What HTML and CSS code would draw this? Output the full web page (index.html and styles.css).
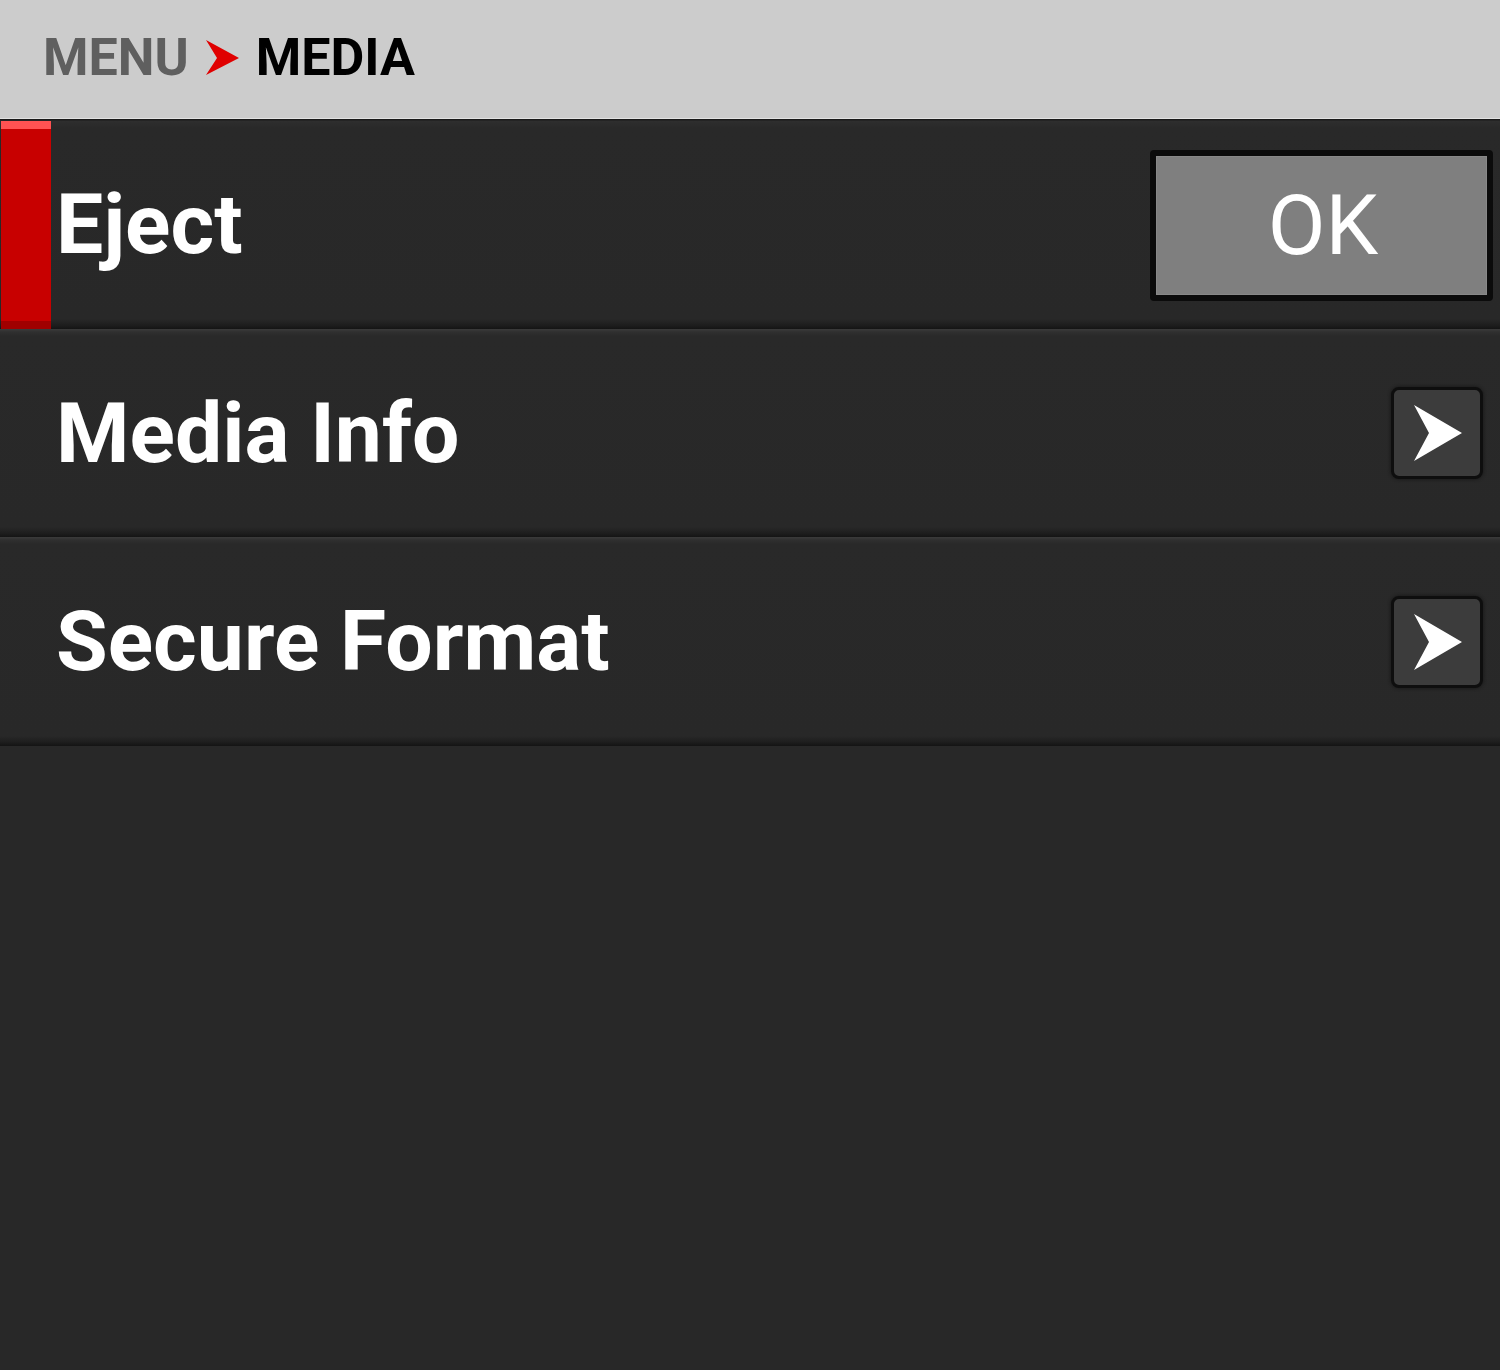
FILE: index.html
```html
<!DOCTYPE html>
<html>
<head>
<meta charset="utf-8">
<link rel="stylesheet" href="styles.css">
</head>
<body>
<header class="crumbs">
  <span class="crumb-parent">MENU</span>
  <svg class="crumb-sep" width="34" height="36" viewBox="0 0 34 36"><path d="M0 0 L33 18 L0 35 L11 18 Z" fill="#e00000"/></svg>
  <span class="crumb-current">MEDIA</span>
</header>
<main class="list">
  <div class="row row-selected row-first">
    <div class="indicator"></div>
    <div class="label">Eject</div>
    <button class="ok-btn"><span class="ok-inner">OK</span></button>
  </div>
  <div class="row">
    <div class="indicator"></div>
    <div class="label">Media Info</div>
    <div class="next-btn"><svg width="50" height="56" viewBox="0 0 50 56"><path d="M1 0 L49 28 L1 56 L16 28 Z" fill="#ffffff"/></svg></div>
  </div>
  <div class="row row-last">
    <div class="indicator"></div>
    <div class="label">Secure Format</div>
    <div class="next-btn"><svg width="50" height="56" viewBox="0 0 50 56"><path d="M1 0 L49 28 L1 56 L16 28 Z" fill="#ffffff"/></svg></div>
  </div>
</main>
</body>
</html>
```
FILE: styles.css
```css
html, body {
  margin: 0;
  padding: 0;
  background: #282828;
  font-family: Roboto, "Liberation Sans", sans-serif;
}
body {
  width: 1500px;
  height: 1370px;
  overflow: hidden;
}
.crumbs {
  height: 119px;
  box-sizing: border-box;
  background: #cccccc;
  border-bottom: 1px solid #e2e2e2;
  display: flex;
  align-items: center;
  padding: 2px 0 6px 43px;
  font-weight: 700;
  font-size: 52px;
}
.crumb-parent {
  color: #5f5f5f;
}
.crumb-sep {
  margin: 0 16px 0 17px;
  position: relative;
  top: 1px;
}
.crumb-current {
  color: #000000;
}
.list {
  display: flex;
  flex-direction: column;
}
.row {
  height: 208px;
  display: flex;
  align-items: center;
  padding-left: 1px;
  background: linear-gradient(to bottom, #3b3b3b 0, #2f2f2f 3px, #292929 7px, #282828 calc(100% - 10px), #1e1e1e calc(100% - 4px), #141414 100%);
}
.row-first {
  height: 210px;
  background: linear-gradient(to bottom, #1a1a1a 0, #1a1a1a 1px, #2e2e2e 2px, #292929 9px, #282828 calc(100% - 10px), #1e1e1e calc(100% - 4px), #141414 100%);
}
.row-last {
  height: 209px;
}
.indicator {
  width: 50px;
  align-self: stretch;
  margin-top: 2px;
}
.row-selected .indicator {
  background: linear-gradient(to bottom, #ff5252 0, #ff5252 8px, #c80000 8px, #c80000 calc(100% - 8px), #a00000 calc(100% - 8px));
}
.label {
  flex: 1;
  margin-left: 5px;
  color: #ffffff;
  font-weight: 700;
  font-size: 84px;
  white-space: nowrap;
}
.ok-btn {
  margin: 2px 7px 0 0;
  padding: 0;
  width: 343px;
  height: 151px;
  box-sizing: border-box;
  border: 6px solid #0b0b0b;
  border-radius: 4px;
  background: #0b0b0b;
  display: flex;
  font-family: inherit;
}
.ok-inner {
  flex: 1;
  align-self: stretch;
  background: #7f7f7f;
  border: 1px solid #888888;
  color: #ffffff;
  font-size: 84px;
  font-weight: 400;
  display: flex;
  align-items: center;
  justify-content: center;
  padding-left: 3px;
}
.next-btn {
  margin-right: 17px;
  width: 92px;
  height: 92px;
  box-sizing: border-box;
  border: 3px solid #0e0e0e;
  border-radius: 8px;
  background: #3c3c3c;
  box-shadow: 0 0 3px 1px #1c1c1c;
  display: flex;
  align-items: center;
  justify-content: center;
  padding-left: 2px;
}
.next-btn svg {
  display: block;
}
```
